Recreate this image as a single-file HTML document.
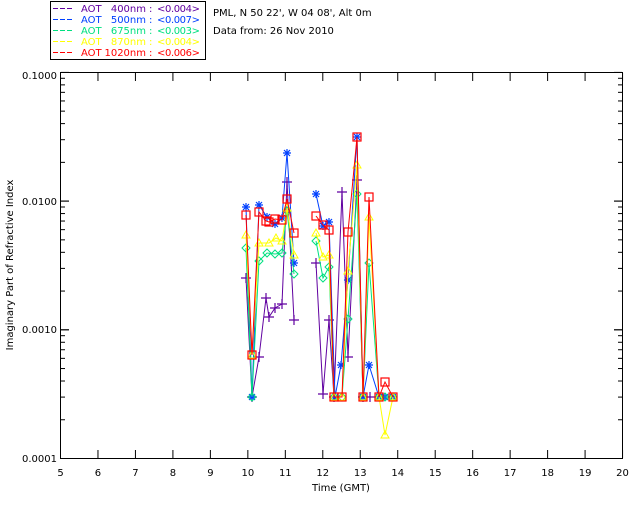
<!DOCTYPE html>
<html><head><meta charset="utf-8"><style>
html,body{margin:0;padding:0;background:#fff;width:640px;height:512px;overflow:hidden}
svg{display:block;font-family:"DejaVu Sans","Liberation Sans",sans-serif}
</style></head><body>
<svg id="s" width="640" height="512" xmlns="http://www.w3.org/2000/svg">
<rect x="50.5" y="1.5" width="155" height="58" fill="#fff" stroke="#000"/>
<g id="leg" font-size="10"></g>
<g font-size="10">
<text x="213" y="16" fill="#000">PML, N 50 22', W 04 08', Alt 0m</text>
<text x="213" y="34" fill="#000">Data from: 26 Nov 2010</text>
<text x="57" y="79" text-anchor="end">0.1000</text>
<text x="57" y="205" text-anchor="end">0.0100</text>
<text x="57" y="333" text-anchor="end">0.0010</text>
<text x="57" y="462" text-anchor="end">0.0001</text>
<text x="341" y="491" text-anchor="middle">Time (GMT)</text>
<text transform="translate(13,265) rotate(-90)" text-anchor="middle">Imaginary Part of Refractive Index</text>
</g>
<rect x="60.5" y="72.5" width="562" height="386" fill="none" stroke="#000"/>
<g id="ax" stroke="#000"></g>
<g id="dat"></g>
</svg>
<script>
var ns="http://www.w3.org/2000/svg",s=document.getElementById('s'),ax=document.getElementById('ax'),dat=document.getElementById('dat'),leg=document.getElementById('leg');
function el(p,t,a,txt){var e=document.createElementNS(ns,t);for(var k in a)e.setAttribute(k,a[k]);if(txt!=null)e.textContent=txt;p.appendChild(e);return e;}
var L=[['#6000a0','400nm','<0.004>'],['#0040ff','500nm','<0.007>'],['#00e080','675nm','<0.003>'],['#ffff00','870nm','<0.004>'],['#ff0000','1020nm','<0.006>']];
L.forEach(function(l,i){var y=12+i*11;
 el(leg,'line',{x1:53,y1:y-3.5,x2:74,y2:y-3.5,stroke:l[0],'stroke-dasharray':'5,2'});
 el(leg,'text',{x:81,y:y,fill:l[0]},'AOT');
 el(leg,'text',{x:146,y:y,fill:l[0],'text-anchor':'end'},l[1]);
 el(leg,'text',{x:149,y:y,fill:l[0]},':');
 el(leg,'text',{x:157,y:y,fill:l[0],textLength:43},l[2]);});
for(var h=5;h<=20;h++){var x=60.5+(h-5)*37.47;
 el(ax,'line',{x1:x,y1:458,x2:x,y2:450});el(ax,'line',{x1:x,y1:73,x2:x,y2:81});
 el(s,'text',{x:x,y:476,'font-size':10,'text-anchor':'middle'},h);}
for(var d=0;d<3;d++)for(var m=1;m<=10;m++){var y=458.5-d*128.7-Math.log10(m)*128.7;var Ln=(m==1||m==10)?8:4;
 el(ax,'line',{x1:61,y1:y,x2:61+Ln,y2:y});el(ax,'line',{x1:622,y1:y,x2:622-Ln,y2:y});}
var B=[[246,207],[252,397],[259,205],[267,217],[275,224],[282,218],[287,153],[294,263],null,[316,194],[323,226],[329,222],[335,397],[341,365],[348,280],[357,137],[363,397],[369,365],[379,397],[385,397],[393,397]];
var R=[[246,215],[252,355],[259,212],[266,221],[269,222],[275,219],[282,220],[287,199],[294,233],null,[316,216],[323,225],[329,230],[334,397],[342,397],[348,232],[357,137],[363,397],[369,197],[379,397],[385,382],[393,397]];
var Y=[[246,235],[252,355],[259,243],[269,243],[276,238],[282,241],[287,208],[294,255],null,[316,233],[323,257],[329,255],[334,397],[342,397],[348,271],[357,165],[363,397],[369,217],[379,397],[385,435],[393,397]];
var G=[[246,248],[252,397],[259,261],[267,253],[275,254],[282,253],[287,211],[294,274],null,[316,241],[323,278],[329,267],[334,397],[342,397],[348,319],[357,194],[363,397],[369,263],[379,397],[385,397],[393,397]];
var P=[[246,278],[252,397],[259,357],[266,298],[269,317],[275,308],[282,304],[287,182],[294,320],null,[316,263],[323,394],[329,320],[334,397],[342,192],[348,357],[357,180],[363,397],[370,397]];
function series(pts,c,mk){var seg=[];function flush(){if(seg.length)el(dat,'polyline',{points:seg.join(' '),fill:'none',stroke:c,'stroke-width':1});seg=[];}
 pts.forEach(function(p){if(!p){flush();return;}seg.push(p.join(','));});flush();
 pts.forEach(function(p){if(!p)return;var x=p[0],y=p[1];
  if(mk=='sq')el(dat,'rect',{x:x-4,y:y-4,width:8,height:8,fill:'none',stroke:c,'stroke-width':1.2});
  else if(mk=='tri')el(dat,'polygon',{points:(x)+','+(y-4)+' '+(x-4)+','+(y+3)+' '+(x+4)+','+(y+3),fill:'none',stroke:c});
  else if(mk=='dia')el(dat,'polygon',{points:x+','+(y-4)+' '+(x+4)+','+y+' '+x+','+(y+4)+' '+(x-4)+','+y,fill:'none',stroke:c});
  else if(mk=='plus'){el(dat,'path',{d:'M'+(x-5)+' '+y+'h10M'+x+' '+(y-5)+'v10',stroke:c,'stroke-width':1.2});}
  else if(mk=='star'){el(dat,'path',{d:'M'+(x-4)+' '+y+'h8M'+x+' '+(y-4)+'v8M'+(x-3)+' '+(y-3)+'l6 6M'+(x+3)+' '+(y-3)+'l-6 6',stroke:c,'stroke-width':1.2});}
 });}
series(P,'#6000a0','plus');series(B,'#0040ff','star');series(G,'#00e080','dia');series(Y,'#ffff00','tri');series(R,'#ff0000','sq');
</script>
</body></html>
